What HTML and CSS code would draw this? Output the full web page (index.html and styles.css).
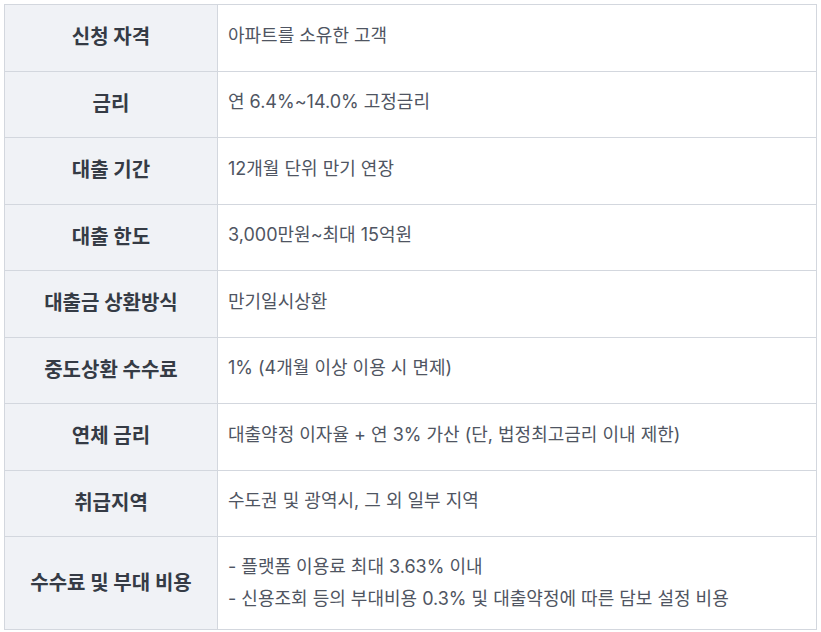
FILE: index.html
```html
<!DOCTYPE html>
<html>
  <head>
    <link rel="stylesheet" href="styles.css">
  </head>
  <body>
    <div class="page">
      <table class="loan-table">
        <tr>
          <th>신청 자격</th>
          <td>아파트를 소유한 고객</td>
        </tr>
        <tr>
          <th>금리</th>
          <td>연 6.4%~14.0% 고정금리</td>
        </tr>
        <tr>
          <th>대출 기간</th>
          <td>12개월 단위 만기 연장</td>
        </tr>
        <tr>
          <th>대출 한도</th>
          <td>3,000만원~최대 15억원</td>
        </tr>
        <tr>
          <th>대출금 상환방식</th>
          <td>만기일시상환</td>
        </tr>
        <tr>
          <th>중도상환 수수료</th>
          <td>1% (4개월 이상 이용 시 면제)</td>
        </tr>
        <tr>
          <th>연체 금리</th>
          <td>대출약정 이자율 + 연 3% 가산 (단, 법정최고금리 이내 제한)</td>
        </tr>
        <tr>
          <th>취급지역</th>
          <td>수도권 및 광역시, 그 외 일부 지역</td>
        </tr>
        <tr>
          <th>수수료 및 부대 비용</th>
          <td class="list-cell">
            <ul class="fee-list">
              <li>- 플랫폼 이용료 최대 3.63% 이내</li>
              <li>- 신용조회 등의 부대비용 0.3% 및 대출약정에 따른 담보 설정 비용</li>
            </ul>
          </td>
        </tr>
      </table>
    </div>
  </body>
</html>
```

FILE: styles.css
```css
body {
  margin: 0;
  background-color: #fff;
  font-family: "Inter", "Noto Sans CJK KR", sans-serif;
}

.page {
  padding: 4px;
}

.loan-table {
  width: 100%;
  border-collapse: collapse;
  border: 1px solid #d3d7de;
}

.loan-table th,
.loan-table td {
  border: 1px solid #d3d7de;
  vertical-align: middle;
}

.loan-table th {
  width: 192px;
  padding: 19.25px 10px;
  background-color: #f0f2f6;
  color: #353b45;
  font-size: 20px;
  font-weight: bold;
  line-height: 27px;
  text-align: center;
}

.loan-table td {
  padding: 17px 10px 21px;
  color: #4f5562;
  font-size: 18px;
  line-height: 22px;
  text-align: left;
}

.loan-table td.list-cell {
  padding: 19px 10px;
}

.fee-list {
  list-style: none;
  margin: 0;
  padding: 0;
}

.fee-list li + li {
  margin-top: 10px;
}
```
